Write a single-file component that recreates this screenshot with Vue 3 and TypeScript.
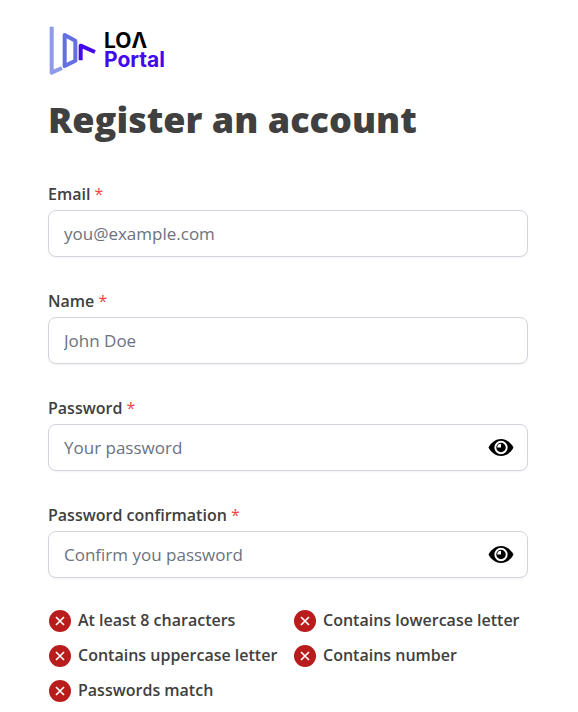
<script setup lang="ts">
import { computed, reactive, ref } from 'vue'

interface Field {
  id: 'email' | 'name' | 'password' | 'confirmation'
  label: string
  type: 'email' | 'text' | 'password'
  placeholder: string
}

const fields: Field[] = [
  { id: 'email', label: 'Email', type: 'email', placeholder: 'you@example.com' },
  { id: 'name', label: 'Name', type: 'text', placeholder: 'John Doe' },
  { id: 'password', label: 'Password', type: 'password', placeholder: 'Your password' },
  { id: 'confirmation', label: 'Password confirmation', type: 'password', placeholder: 'Confirm you password' },
]

const form = reactive({ email: '', name: '', password: '', confirmation: '' })
const revealed = ref<Record<string, boolean>>({})

const rules = computed(() => [
  { text: 'At least 8 characters', met: form.password.length >= 8 },
  { text: 'Contains lowercase letter', met: /[a-z]/.test(form.password) },
  { text: 'Contains uppercase letter', met: /[A-Z]/.test(form.password) },
  { text: 'Contains number', met: /\d/.test(form.password) },
  { text: 'Passwords match', met: form.password !== '' && form.password === form.confirmation },
])

function toggle(id: string) {
  revealed.value[id] = !revealed.value[id]
}
</script>

<template>
  <main class="page">
    <header class="brand">
      <svg class="mark" viewBox="0 0 144 156" fill="none" stroke-width="12" stroke-linejoin="round" aria-hidden="true">
        <path d="M11 8V146L42 132" stroke="#8f9ae8" />
        <path d="M50 33L82 50V110L50 126Z" stroke="#6370e2" />
        <path d="M98 109V65L141 84" stroke="#4408ee" />
      </svg>
      <div class="wordmark">
        <span>LOΛ</span>
        <span class="portal">Portal</span>
      </div>
    </header>

    <h1>Register an account</h1>

    <form @submit.prevent>
      <div v-for="field in fields" :key="field.id" class="field">
        <label :for="field.id">{{ field.label }} <span class="required">*</span></label>
        <div class="control">
          <input
            :id="field.id"
            v-model="form[field.id]"
            :type="revealed[field.id] ? 'text' : field.type"
            :placeholder="field.placeholder"
            required
          />
          <button
            v-if="field.type === 'password'"
            type="button"
            aria-label="Show password"
            @click="toggle(field.id)"
          >
            <svg viewBox="0 0 26 26" aria-hidden="true">
              <path d="M0.500 12.500C3.500 7 8 4 13 4S22.500 7 25.500 12.500C22.500 18 18 21 13 21S3.500 18 0.500 12.500Z" />
              <circle cx="13" cy="12.500" r="5.700" fill="none" stroke="#fff" stroke-width="1.900" />
              <path d="M13 12.500H9.200A3.800 3.800 0 0 1 13 8.700Z" fill="#fff" />
            </svg>
          </button>
        </div>
      </div>

      <ul>
        <li v-for="rule in rules" :key="rule.text" :class="{ met: rule.met }">
          <svg viewBox="0 0 24 24" aria-hidden="true">
            <circle cx="12" cy="12" r="11" />
            <path v-if="rule.met" d="M7.500 12.500L10.500 15.500L16.500 9" />
            <path v-else d="M8 8L16 16M16 8L8 16" />
          </svg>
          <span>{{ rule.text }}</span>
        </li>
      </ul>
    </form>
  </main>
</template>

<style>
body {
  margin: 0;
  background: #fff;
}
</style>

<style scoped>
.page {
  box-sizing: border-box;
  padding: 24px 50px 8px 48px;
  color: #404040;
  font-family: "Open Sans", "Noto Sans", sans-serif;
}

.brand {
  display: flex;
  align-items: center;
  gap: 8px;
}

.mark {
  width: 48px;
  height: 52px;
}

.wordmark {
  display: flex;
  flex-direction: column;
  color: #000;
  font: 700 21px/19px Inter, sans-serif;
}

.portal {
  color: #4408ee;
}

h1 {
  margin: 16px 0 34px;
  font-size: 36px;
  font-weight: 800;
  line-height: 56px;
}

.field {
  display: flex;
  flex-direction: column;
  gap: 4px;
  margin-bottom: 32px;
}

.field:last-of-type {
  margin-bottom: 30px;
}

label {
  font-size: 16px;
  font-weight: 600;
  line-height: 24px;
}

.required {
  color: #ef4444;
  font-weight: 400;
}

.control {
  position: relative;
}

input {
  display: block;
  box-sizing: border-box;
  width: 100%;
  height: 47px;
  padding: 0 15px;
  border: 1px solid #d1d5db;
  border-radius: 8px;
  background: #fff;
  box-shadow: 0 1px 2px rgb(0 0 0 / 5%);
  color: inherit;
  font: 400 17px/28px "Open Sans", "Noto Sans", sans-serif;
}

input::placeholder {
  color: #6b7280;
  opacity: 1;
}

button {
  position: absolute;
  top: 0;
  right: 14px;
  bottom: 0;
  display: flex;
  align-items: center;
  padding: 0;
  border: 0;
  background: none;
  cursor: pointer;
}

button svg {
  width: 26px;
  height: 26px;
}

ul {
  display: grid;
  grid-template-columns: repeat(2, minmax(0, 1fr));
  gap: 10px;
  margin: 0;
  padding: 0;
  list-style: none;
}

li {
  display: flex;
  align-items: center;
  gap: 6px;
  font-size: 16px;
  font-weight: 600;
  line-height: 25px;
  white-space: nowrap;
}

li svg {
  flex: none;
  width: 24px;
  height: 24px;
  fill: #b91c1c;
  stroke: none;
}

li path {
  fill: none;
  stroke: #fff;
  stroke-width: 1.7;
}

li.met svg {
  fill: #15803d;
}
</style>
